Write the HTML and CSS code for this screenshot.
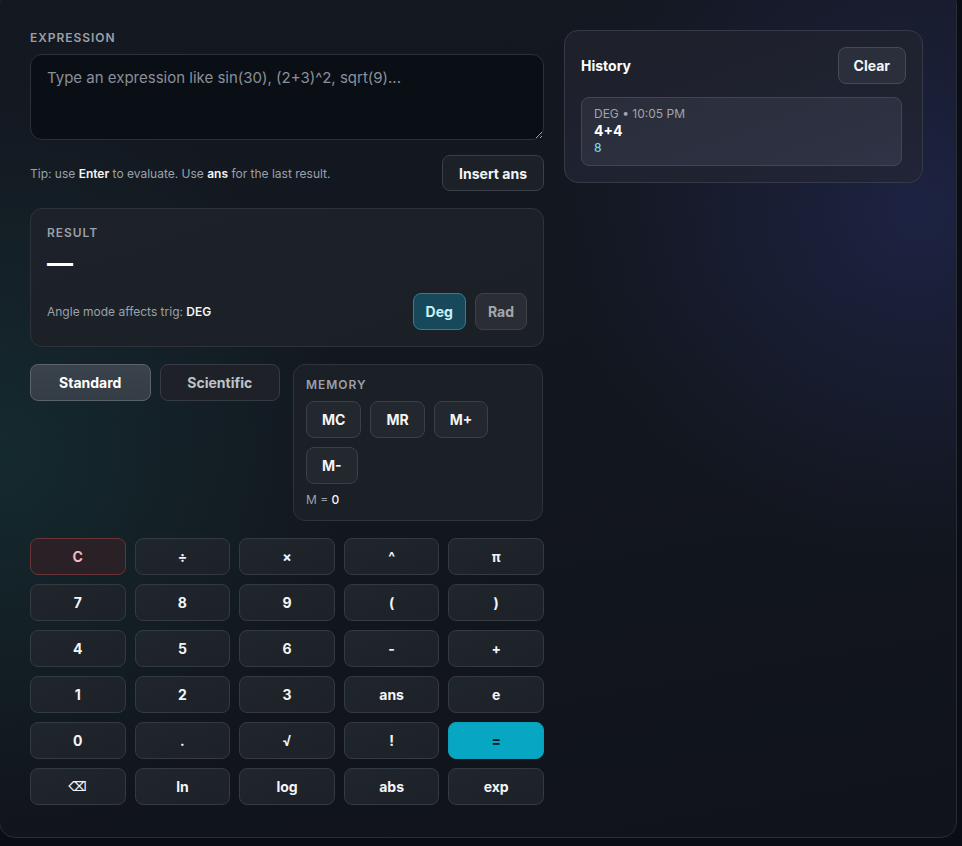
FILE: index.html
```html
<!DOCTYPE html>
<html lang="en">
<head>
    <meta charset="UTF-8">
    <meta name="viewport" content="width=device-width, initial-scale=1.0">
    <title>Calculator</title>
    <link rel="stylesheet" href="styles.css">
</head>
<body>
    <div class="app">
        <div class="main">
            <div class="label">Expression</div>
            <textarea class="expr" placeholder="Type an expression like sin(30), (2+3)^2, sqrt(9)..."></textarea>

            <div class="tip-row">
                <div class="tip">Tip: use <b>Enter</b> to evaluate. Use <b>ans</b> for the last result.</div>
                <button class="btn">Insert ans</button>
            </div>

            <div class="result">
                <div class="label">Result</div>
                <div class="result-value">—</div>
                <div class="result-row">
                    <div class="tip">Angle mode affects trig: <b>DEG</b></div>
                    <div class="angle">
                        <button class="btn btn-sm btn-on">Deg</button>
                        <button class="btn btn-sm btn-off">Rad</button>
                    </div>
                </div>
            </div>

            <div class="mode-row">
                <div class="tabs">
                    <button class="tab tab-active">Standard</button>
                    <button class="tab">Scientific</button>
                </div>
                <div class="memory">
                    <div class="label">Memory</div>
                    <div class="mem-btns">
                        <button class="btn btn-mem">MC</button>
                        <button class="btn btn-mem">MR</button>
                        <button class="btn btn-mem">M+</button>
                        <button class="btn btn-mem">M-</button>
                    </div>
                    <div class="mem-val">M = <b>0</b></div>
                </div>
            </div>

            <div class="keypad">
                <button class="key key-clear">C</button>
                <button class="key">÷</button>
                <button class="key">×</button>
                <button class="key">^</button>
                <button class="key">π</button>
                <button class="key">7</button>
                <button class="key">8</button>
                <button class="key">9</button>
                <button class="key">(</button>
                <button class="key">)</button>
                <button class="key">4</button>
                <button class="key">5</button>
                <button class="key">6</button>
                <button class="key">-</button>
                <button class="key">+</button>
                <button class="key">1</button>
                <button class="key">2</button>
                <button class="key">3</button>
                <button class="key">ans</button>
                <button class="key">e</button>
                <button class="key">0</button>
                <button class="key">.</button>
                <button class="key">√</button>
                <button class="key">!</button>
                <button class="key key-eq">=</button>
                <button class="key key-back">⌫</button>
                <button class="key">ln</button>
                <button class="key">log</button>
                <button class="key">abs</button>
                <button class="key">exp</button>
            </div>
        </div>

        <div class="side">
            <div class="history">
                <div class="history-head">
                    <div class="history-title">History</div>
                    <button class="btn btn-clear">Clear</button>
                </div>
                <div class="history-list">
                    <div class="history-item">
                        <div class="h-meta">DEG • 10:05 PM</div>
                        <div class="h-expr">4+4</div>
                        <div class="h-res">8</div>
                    </div>
                </div>
            </div>
        </div>
    </div>
</body>
</html>
```

FILE: styles.css
```css
* {
    box-sizing: border-box;
    margin: 0;
    padding: 0;
}

body {
    font-family: Inter, 'Noto Sans', 'DejaVu Sans', sans-serif;
    background-color: #0a0d14;
    color: #f3f4f6;
    height: 846px;
    overflow: hidden;
}

button {
    font-family: inherit;
    cursor: pointer;
}

.app {
    width: 958px;
    height: 850px;
    margin: -12px 0 0 -1px;
    padding: 41px 33px 0 30px;
    display: grid;
    grid-template-columns: 514px 359px;
    gap: 20px;
    align-items: start;
    border: 1px solid #282d36;
    border-radius: 16px;
    background:
        radial-gradient(circle at 96% 26%, rgba(44, 52, 120, 0.4), transparent 32%),
        radial-gradient(circle at 0% 55%, rgba(24, 78, 78, 0.35), transparent 35%),
        linear-gradient(170deg, #141821, #12161d 60%, #10131a);
}

.label {
    font-size: 12px;
    line-height: 16px;
    font-weight: 600;
    letter-spacing: 0.08em;
    text-transform: uppercase;
    color: #9aa0a8;
}

.expr {
    display: block;
    width: 100%;
    height: 86px;
    margin-top: 8px;
    padding: 12px 16px;
    font-family: inherit;
    font-size: 15px;
    line-height: 22px;
    color: #e5e7eb;
    background-color: #0a0e15;
    border: 1px solid #2b3039;
    border-radius: 12px;
    resize: vertical;
    outline: none;
}

.expr::placeholder {
    color: #8a9099;
}

.tip-row {
    display: flex;
    justify-content: space-between;
    align-items: center;
    margin-top: 15px;
}

.tip {
    font-size: 12px;
    color: #9ba1aa;
}

.tip b {
    font-weight: 600;
    color: #f3f4f6;
}

.btn {
    height: 36px;
    padding: 0 16px;
    font-size: 14px;
    font-weight: 700;
    color: #f3f4f6;
    background-color: #1c2027;
    border: 1px solid #3a3f48;
    border-radius: 8px;
}

.result {
    margin-top: 17px;
    padding: 16px;
    border: 1px solid #2e333b;
    border-radius: 12px;
    background: linear-gradient(160deg, #1d2129, #1b1f26);
}

.result-value {
    margin-top: 6px;
    font-size: 26px;
    line-height: 32px;
    font-weight: 700;
    color: #ffffff;
}

.result-row {
    display: flex;
    justify-content: space-between;
    align-items: center;
    margin-top: 14px;
}

.angle {
    display: flex;
    gap: 9px;
}

.btn-sm {
    height: 37px;
    padding: 0 12px;
}

.btn-on {
    background-color: #18495a;
    border-color: #1f8799;
    color: #c6f2fa;
}

.btn-off {
    background-color: #2a2d33;
    border-color: #3d4249;
    color: #a3a7ad;
}

.mode-row {
    display: grid;
    grid-template-columns: 250px 250px;
    gap: 13px;
    margin-top: 17px;
    align-items: start;
}

.tabs {
    display: flex;
    gap: 9px;
}

.tab {
    flex: 1;
    height: 37px;
    font-size: 14px;
    font-weight: 700;
    color: #bfc3c9;
    background-color: #1e2228;
    border: 1px solid #363b43;
    border-radius: 8px;
}

.tab-active {
    color: #ffffff;
    background: linear-gradient(180deg, #3a434b, #343c45);
    border-color: #5a626b;
}

.memory {
    padding: 12px;
    border: 1px solid #2f343c;
    border-radius: 12px;
    background-color: #1b1f26;
}

.mem-btns {
    display: flex;
    flex-wrap: wrap;
    gap: 9px;
    margin-top: 8px;
}

.btn-mem {
    height: 37px;
    padding: 0 15px;
    background-color: #23272e;
    border-color: #3b4048;
}

.mem-val {
    margin-top: 8px;
    font-size: 12px;
    line-height: 16px;
    color: #9ba1aa;
}

.mem-val b {
    font-weight: 500;
    color: #f3f4f6;
}

.keypad {
    display: grid;
    grid-template-columns: repeat(5, 1fr);
    grid-auto-rows: 37px;
    gap: 9px;
    margin-top: 17px;
}

.key {
    font-size: 14px;
    font-weight: 700;
    color: #f3f4f6;
    background: linear-gradient(160deg, #1f262c, #1d2128);
    border: 1px solid #343a42;
    border-radius: 8px;
}

.key-clear {
    color: #fbb6b6;
    background: #2a2127;
    border-color: #6a3338;
}

.key-eq {
    color: #0a1b22;
    background: #07a6c3;
    border-color: #0aa0bb;
}

.key-back {
    font-family: 'DejaVu Sans', sans-serif;
    font-size: 13px;
}

.history {
    padding: 16px;
    border: 1px solid #363a47;
    border-radius: 14px;
    background: linear-gradient(160deg, #1e212b, #1f2230 70%, #222538);
}

.history-head {
    display: flex;
    justify-content: space-between;
    align-items: center;
}

.history-title {
    font-size: 14px;
    font-weight: 700;
    color: #ffffff;
}

.btn-clear {
    height: 37px;
    padding: 0 15px;
    background-color: #2b2f3b;
    border-color: #454a57;
}

.history-list {
    margin-top: 13px;
    padding-right: 4px;
}

.history-item {
    padding: 8px 12px 9px;
    border: 1px solid #41455a;
    border-radius: 8px;
    background: linear-gradient(160deg, #2a2d39, #2e3142 80%, #313447);
}

.h-meta {
    font-size: 12px;
    line-height: 16px;
    color: #a0a4ad;
}

.h-expr {
    font-size: 14px;
    line-height: 18px;
    font-weight: 700;
    color: #ffffff;
}

.h-res {
    font-size: 12px;
    line-height: 16px;
    font-weight: 500;
    color: #7ad6e4;
}
```
